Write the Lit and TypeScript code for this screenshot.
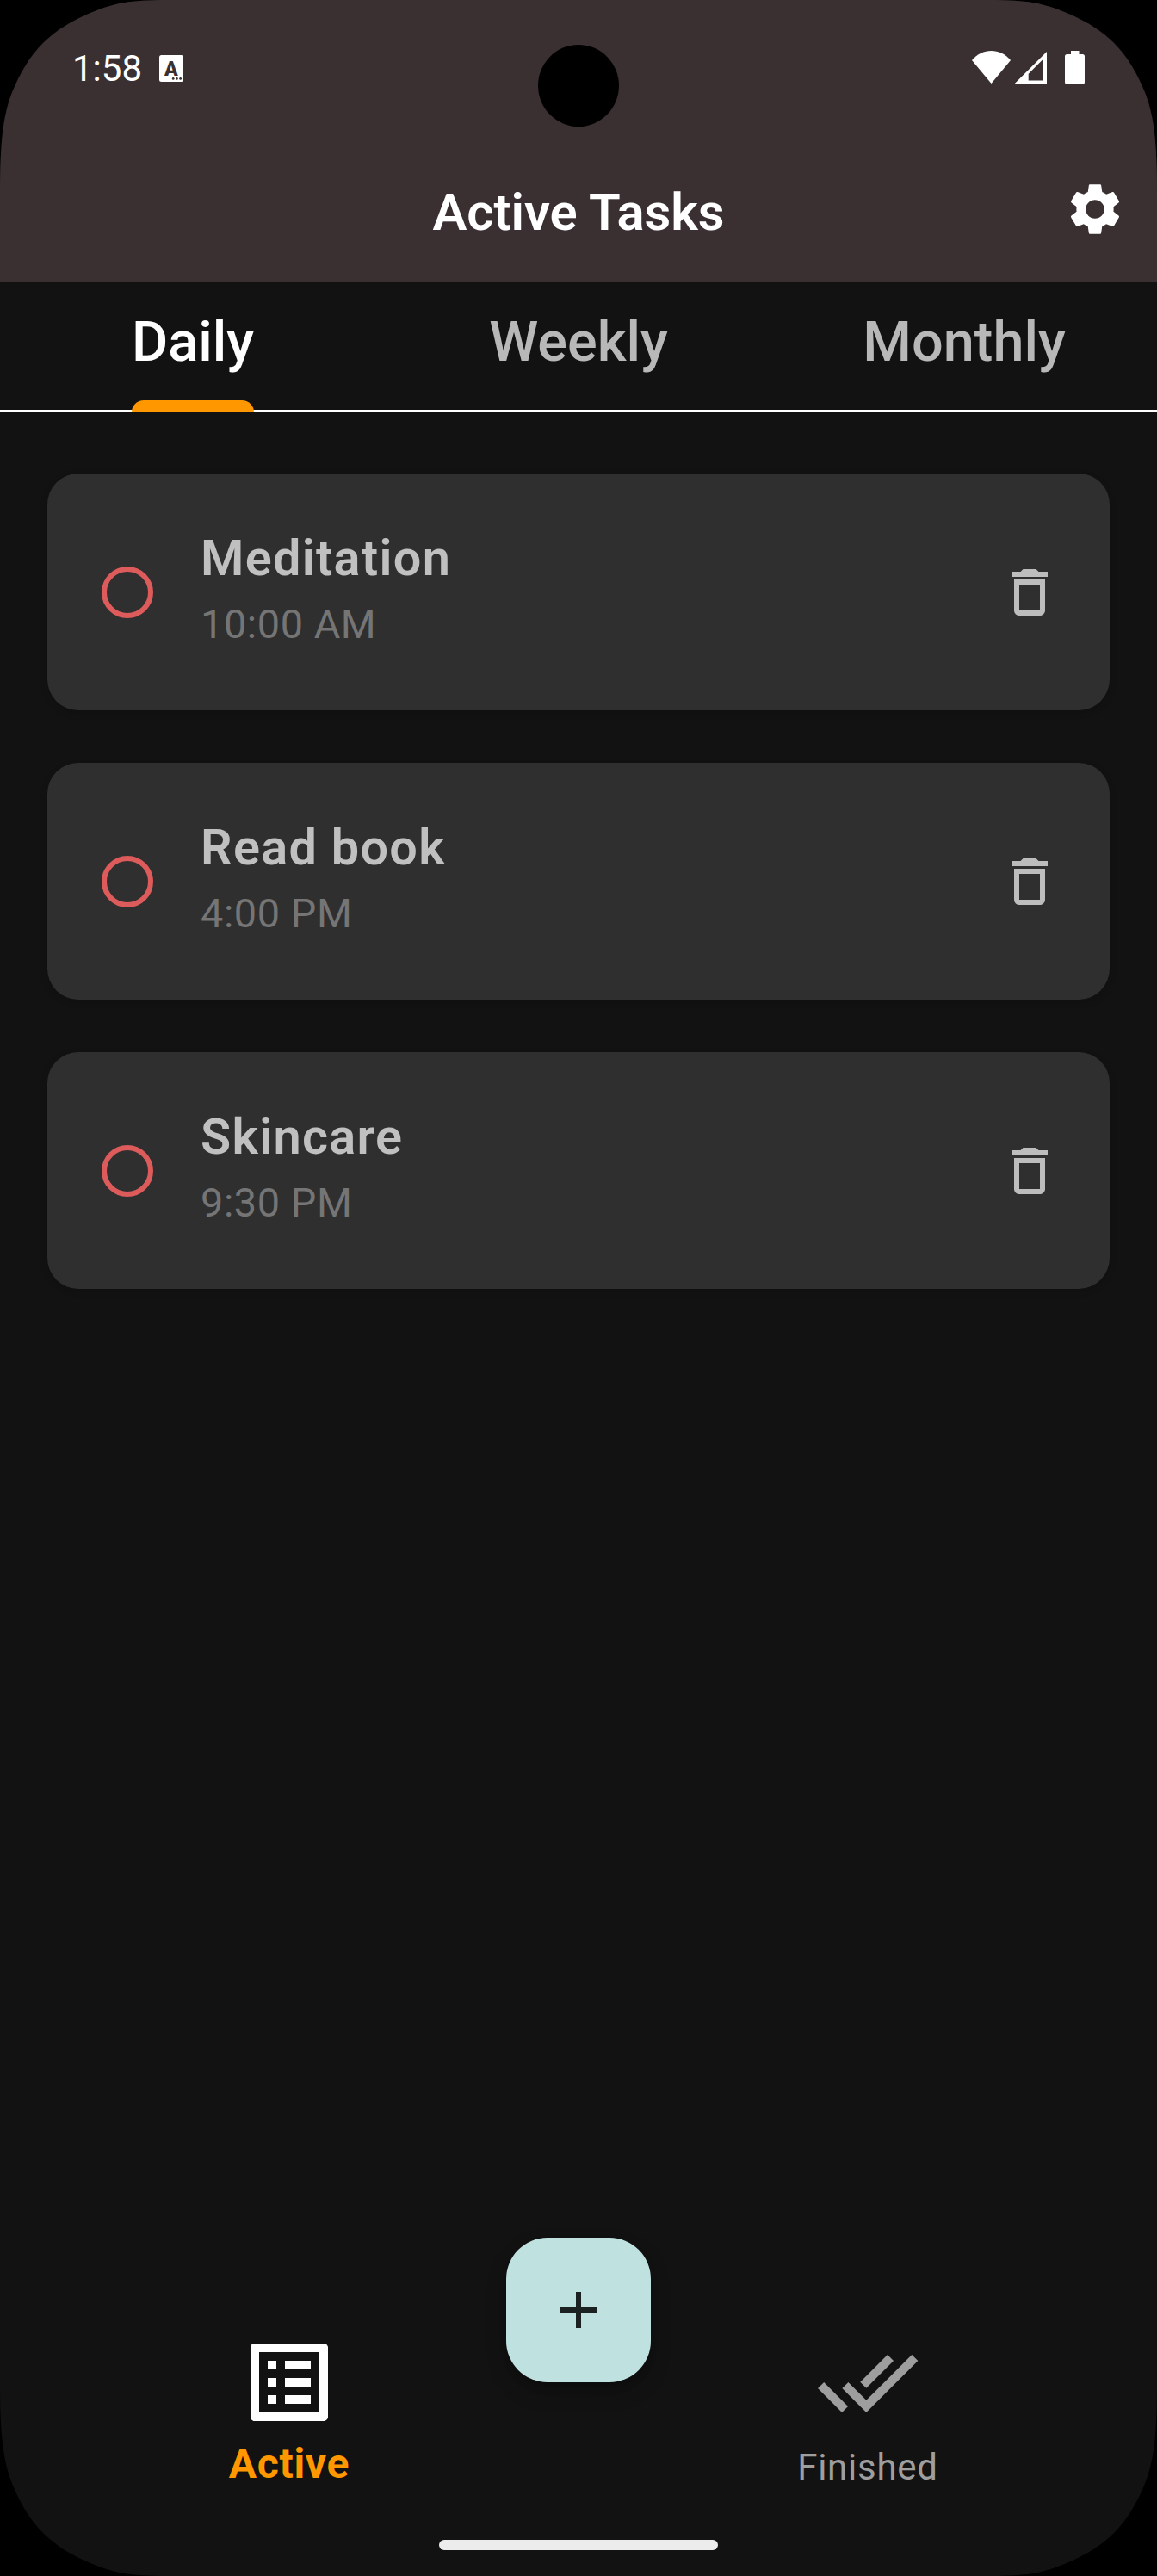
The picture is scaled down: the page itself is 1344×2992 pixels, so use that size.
import { LitElement, html, css, svg } from "lit";
import { customElement, property, state } from "lit/decorators.js";
import { classMap } from "lit/directives/class-map.js";

const icon = (size: number, body: unknown) =>
  html`<svg class="icon" width=${size} height=${size} viewBox="0 0 24 24" fill="currentColor">${body}</svg>`;

const GEAR = svg`<path d="M19.14,12.94c0.04-0.3,0.06-0.61,0.06-0.94c0-0.32-0.02-0.64-0.07-0.94l2.03-1.58c0.18-0.14,0.23-0.41,0.12-0.61 l-1.92-3.32c-0.12-0.22-0.37-0.29-0.59-0.22l-2.39,0.96c-0.5-0.38-1.03-0.7-1.62-0.94L14.4,2.81c-0.04-0.24-0.24-0.41-0.48-0.41 h-3.84c-0.24,0-0.43,0.17-0.47,0.41L9.25,5.35C8.66,5.59,8.12,5.92,7.63,6.29L5.24,5.33c-0.22-0.08-0.47,0-0.59,0.22L2.74,8.87 C2.62,9.08,2.66,9.34,2.86,9.48l2.03,1.58C4.84,11.36,4.8,11.69,4.8,12s0.02,0.64,0.07,0.94l-2.03,1.58 c-0.18,0.14-0.23,0.41-0.12,0.61l1.92,3.32c0.12,0.22,0.37,0.29,0.59,0.22l2.39-0.96c0.5,0.38,1.03,0.7,1.62,0.94l0.36,2.54 c0.05,0.24,0.24,0.41,0.48,0.41h3.84c0.24,0,0.44-0.17,0.47-0.41l0.36-2.54c0.59-0.24,1.13-0.56,1.62-0.94l2.39,0.96 c0.22,0.08,0.47,0,0.59-0.22l1.92-3.32c0.12-0.22,0.07-0.47-0.12-0.61L19.14,12.94z M12,15.6c-1.98,0-3.6-1.62-3.6-3.6 s1.62-3.6,3.6-3.6s3.6,1.62,3.6,3.6S13.98,15.6,12,15.6z"/>`;
const CIRCLE = svg`<circle cx="12" cy="12" r="9" fill="none" stroke="currentColor" stroke-width="2"/>`;
const TRASH = svg`<path d="M6 19c0 1.1.9 2 2 2h8c1.1 0 2-.9 2-2V7H6v12zM8 9h8v10H8V9zm7.5-5l-1-1h-5l-1 1H5v2h14V4z"/>`;
const LIST = svg`<path d="M19 5v14H5V5h14m1.1-2H3.9c-.5 0-.9.4-.9.9v16.2c0 .4.4.9.9.9h16.2c.4 0 .9-.5.9-.9V3.9c0-.5-.5-.9-.9-.9zM11 7h6v2h-6V7zm0 4h6v2h-6v-2zm0 4h6v2h-6zM7 7h2v2H7zm0 4h2v2H7zm0 4h2v2H7z"/>`;
const DONE_ALL = svg`<path d="M18 7l-1.41-1.41-6.34 6.34 1.41 1.41L18 7zm4.24-1.41L11.66 16.17 7.48 12l-1.41 1.41L11.66 19l12-12-1.42-1.41zM.41 13.41L6 19l1.41-1.41L1.83 12 .41 13.41z"/>`;
const PLUS = svg`<path d="M19 13h-6v6h-2v-6H5v-2h6V5h2v6h6v2z"/>`;

interface Task {
  title: string;
  time: string;
}

@customElement("status-bar")
class StatusBar extends LitElement {
  static styles = css`
    :host {
      display: flex;
      justify-content: space-between;
      align-items: flex-start;
      height: 156px;
      padding: 0 84px;
      box-sizing: border-box;
      color: #fff;
    }
    .left {
      display: flex;
      padding-top: 55px;
      gap: 20px;
    }
    .clock {
      font-size: 42px;
      line-height: 50px;
    }
    .badge {
      margin-top: 9px;
    }
    .right {
      display: flex;
      padding-top: 59px;
    }
    svg {
      display: block;
    }
  `;
  render() {
    return html`
      <div class="left">
        <div class="clock">1:58</div>
        <svg class="badge" width="28" height="31" viewBox="0 0 28 31">
          <rect width="28" height="31" rx="2.5" fill="#fff" />
          <text x="13.9" y="23.6" text-anchor="middle" font-size="23" font-weight="900" fill="#3a3031">A</text>
          <g fill="#3a3031">
            <circle cx="16.2" cy="27.4" r="1.4" />
            <circle cx="20.4" cy="27.4" r="1.4" />
            <circle cx="24.6" cy="27.4" r="1.4" />
          </g>
        </svg>
      </div>
      <div class="right">
        <svg width="131" height="40" viewBox="0 0 131 40" fill="#fff">
          <path d="M0 11C12-3.6 33-3.6 45 11L22.5 38Z" />
          <path fill-rule="evenodd" d="M49 38.7L87 1V38.7ZM83 9.500L65.7 26.8V34.6H83Z" />
          <path d="M115 0h9.5v4h4a2.5 2.5 0 0 1 2.5 2.5v29.7a2.5 2.5 0 0 1-2.5 2.5h-18a2.5 2.5 0 0 1-2.500-2.500V6.500a2.500 2.500 0 0 1 2.500-2.500h4.500z" />
        </svg>
      </div>
    `;
  }
}

@customElement("task-card")
class TaskCard extends LitElement {
  @property({ attribute: false }) task: Task = { title: "", time: "" };
  static styles = css`
    :host {
      display: flex;
      align-items: center;
      height: 275px;
      box-sizing: border-box;
      padding: 0 57px;
      border-radius: 36px;
      background: #2f2f2f;
      box-shadow: 0 3px 9px rgba(0, 0, 0, 0.15);
    }
    .icon {
      display: block;
    }
    .check {
      color: #de5b5b;
    }
    .text {
      flex: 1;
      margin-left: 49px;
      padding-bottom: 3px;
    }
    .title {
      font-size: 57.6px;
      font-weight: 600;
      line-height: 78px;
      letter-spacing: 1.3px;
      color: #c0c0c0;
    }
    .time {
      font-size: 46.8px;
      line-height: 74px;
      letter-spacing: 0.6px;
      color: #757575;
    }
    .bin {
      color: #bdbdbd;
    }
  `;
  render() {
    return html`
      <div class="check">${icon(72, CIRCLE)}</div>
      <div class="text">
        <div class="title">${this.task.title}</div>
        <div class="time">${this.task.time}</div>
      </div>
      <div class="bin">${icon(72, TRASH)}</div>
    `;
  }
}

@customElement("app-root")
class AppRoot extends LitElement {
  @state() private tab = "Daily";
  private tabs = ["Daily", "Weekly", "Monthly"];
  private tasks: Task[] = [
    { title: "Meditation", time: "10:00 AM" },
    { title: "Read book", time: "4:00 PM" },
    { title: "Skincare", time: "9:30 PM" },
  ];

  static styles = css`
    :host {
      display: block;
      width: 1344px;
      height: 2992px;
      background: #000;
      font-family: Roboto, "Liberation Sans", sans-serif;
    }
    .icon {
      display: block;
    }
    .screen {
      position: relative;
      display: flex;
      flex-direction: column;
      height: 2992px;
      background: #121212;
      clip-path: path(
        "M0 225C0 165 3.4 133 15 105C23.5 84.7 34.5 65.5 50 50C65.5 34.5 84.7 23.5 105 15C133 3.4 150 0 195 0H1149C1194 0 1211 3.4 1239 15C1259.3 23.5 1278.5 34.5 1294 50C1309.5 65.5 1320.5 84.7 1329 105C1340.6 133 1344 165 1344 225V2767C1344 2827 1340.6 2859 1329 2887C1320.5 2907.3 1309.5 2926.5 1294 2942C1278.5 2957.5 1259.3 2968.5 1239 2977C1211 2988.6 1194 2992 1149 2992H195C150 2992 133 2988.6 105 2977C84.7 2968.5 65.5 2957.5 50 2942C34.5 2926.5 23.5 2907.3 15 2887C3.4 2859 0 2827 0 2767Z"
      );
    }
    .header {
      height: 327px;
      background: #3a3031;
      color: #fff;
    }
    .camera {
      position: absolute;
      left: 625px;
      top: 52px;
      width: 94px;
      height: 95px;
      border-radius: 50%;
      background: #000;
    }
    .appbar {
      display: grid;
      grid-template-columns: 1fr auto 1fr;
      align-items: center;
      height: 171px;
      padding: 0 36px;
    }
    .heading {
      grid-column: 2;
      font-size: 59.8px;
      font-weight: 600;
      line-height: 72px;
      padding-top: 10px;
      letter-spacing: -0.05px;
    }
    .settings {
      justify-self: end;
      padding-top: 3px;
    }
    .tabs {
      display: grid;
      grid-template-columns: repeat(3, 1fr);
      height: 152px;
      box-sizing: border-box;
      background: linear-gradient(#fff, #fff) bottom / 100% 3px no-repeat;
    }
    .tab {
      display: flex;
      justify-content: center;
      font-size: 64.8px;
      font-weight: 500;
      color: #b8b8b8;
    }
    .label {
      display: flex;
      flex-direction: column;
      justify-content: space-between;
      line-height: 78px;
      padding-top: 31px;
    }
    .tab.on {
      color: #fff;
    }
    .tab.on .label::after {
      content: "";
      height: 14px;
      border-radius: 14px 14px 0 0;
      background: #ff9800;
    }
    .list {
      display: flex;
      flex-direction: column;
      gap: 61px;
      padding: 71px 55px 0;
    }
    .fabrow {
      display: flex;
      justify-content: center;
      align-items: flex-start;
      margin-top: auto;
      height: 108px;
    }
    .fab {
      display: grid;
      place-items: center;
      flex: none;
      width: 168px;
      height: 168px;
      border-radius: 48px;
      background: #bfe1df;
      color: #1b2121;
      box-shadow: 0 12px 24px rgba(0, 0, 0, 0.18), 0 6px 9px rgba(0, 0, 0, 0.15);
    }
    .navrow {
      display: grid;
      grid-template-columns: 1fr 1fr;
      height: 243px;
    }
    .item {
      display: flex;
      flex-direction: column;
      align-items: center;
      color: #9e9e9e;
      font-size: 42px;
      letter-spacing: 0.75px;
      line-height: 60px;
    }
    .name {
      padding-top: 9px;
    }
    .item.on {
      color: #fff;
    }
    .item.on .name {
      color: #ff9800;
      font-size: 48px;
      font-weight: 700;
      letter-spacing: 0.7px;
      padding-top: 5px;
    }
    .pillrow {
      display: flex;
      justify-content: center;
      height: 42px;
    }
    .pill {
      width: 324px;
      height: 12px;
      border-radius: 6px;
      background: #ececec;
    }
  `;

  render() {
    return html`
      <div class="screen">
        <div class="header">
          <status-bar></status-bar>
          <div class="appbar">
            <div class="heading">Active Tasks</div>
            <div class="settings">${icon(72, GEAR)}</div>
          </div>
        </div>
        <div class="tabs">
          ${this.tabs.map(
            (t) => html`<div class=${classMap({ tab: true, on: t === this.tab })} @click=${() => (this.tab = t)}>
              <div class="label">${t}</div>
            </div>`
          )}
        </div>
        <div class="list">${this.tasks.map((t) => html`<task-card .task=${t}></task-card>`)}</div>
        <div class="fabrow"><div class="fab">${icon(72, PLUS)}</div></div>
        <div class="navrow">
          <div class="item on">${icon(120, LIST)}<div class="name">Active</div></div>
          <div class="item">${icon(120, DONE_ALL)}<div class="name">Finished</div></div>
        </div>
        <div class="pillrow"><div class="pill"></div></div>
        <div class="camera"></div>
      </div>
    `;
  }
}
